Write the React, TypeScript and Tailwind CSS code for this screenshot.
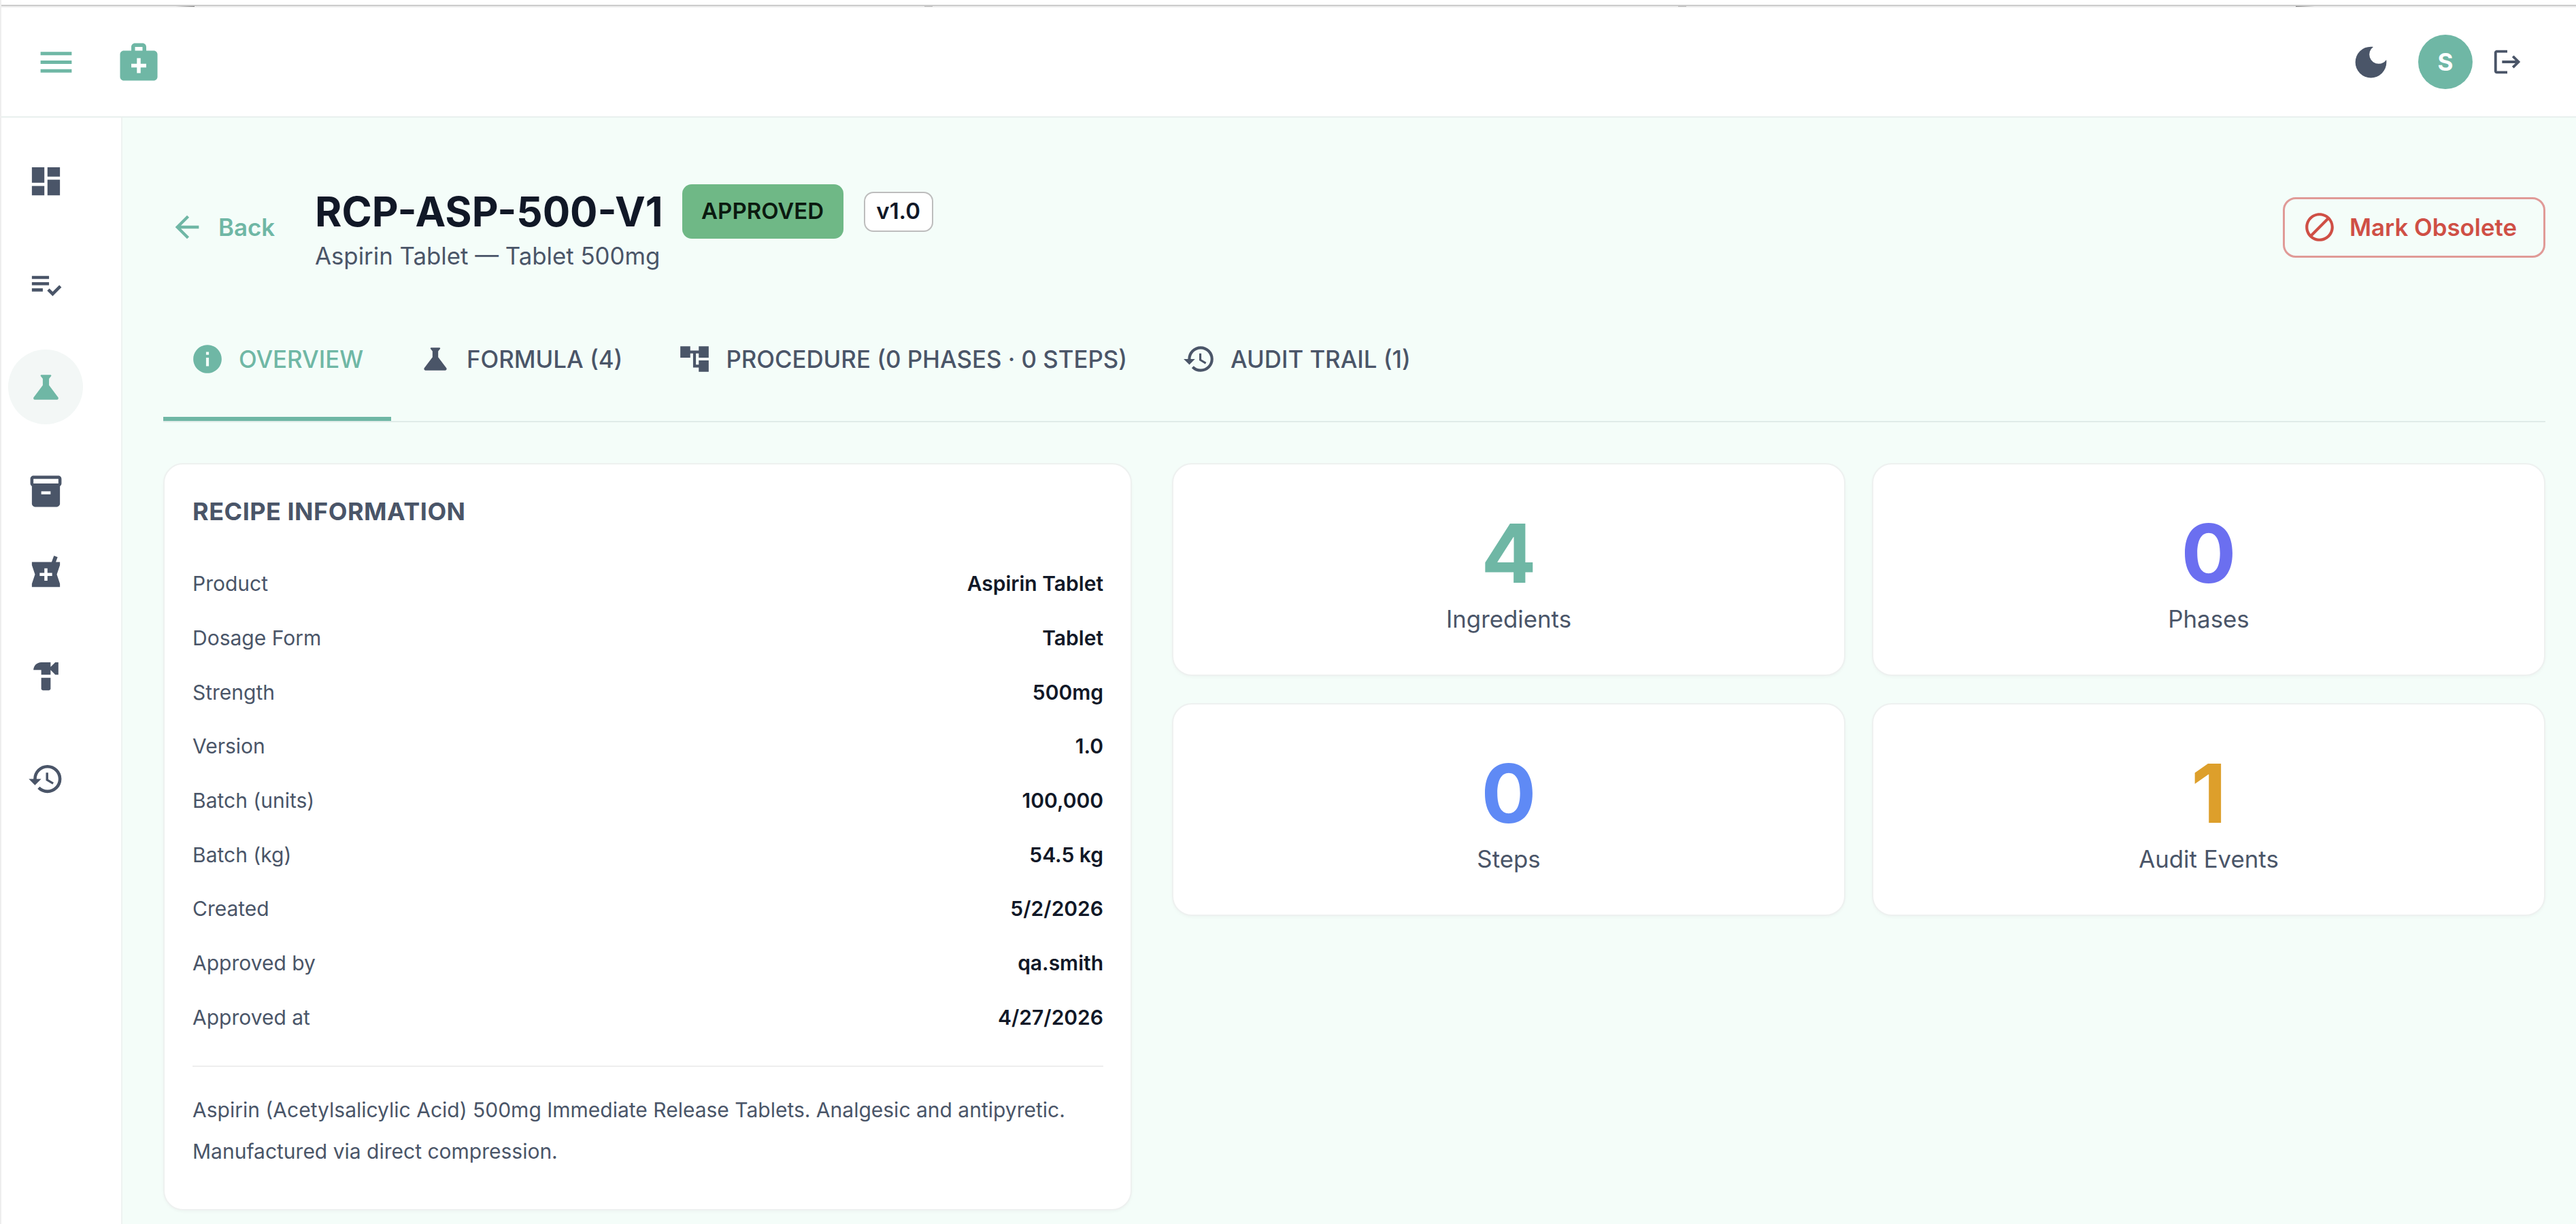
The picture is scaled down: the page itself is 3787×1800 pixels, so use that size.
import type { FC, ReactNode } from "react";
import {
  MdAccountTree,
  MdArrowBack,
  MdBlock,
  MdDarkMode,
  MdDashboard,
  MdHardware,
  MdHistory,
  MdInfo,
  MdInventory2,
  MdLocalPharmacy,
  MdLogout,
  MdMedicalServices,
  MdMenu,
  MdPlaylistAddCheck,
  MdScience,
} from "react-icons/md";

const navItems = [
  { icon: <MdDashboard size={55} />, mt: "mt-[38px]", active: false },
  { icon: <MdPlaylistAddCheck size={55} />, mt: "mt-[43px]", active: false },
  { icon: <MdScience size={55} />, mt: "mt-[40px]", active: true },
  { icon: <MdInventory2 size={55} />, mt: "mt-[43px]", active: false },
  { icon: <MdLocalPharmacy size={55} />, mt: "mt-[10px]", active: false },
  { icon: <MdHardware size={55} />, mt: "mt-[42px]", active: false },
  { icon: <MdHistory size={55} />, mt: "mt-[41px]", active: false },
];

const tabs: { label: string; icon: ReactNode; active?: boolean }[] = [
  { label: "OVERVIEW", icon: <MdInfo size={50} />, active: true },
  { label: "FORMULA (4)", icon: <MdScience size={50} /> },
  { label: "PROCEDURE (0 PHASES · 0 STEPS)", icon: <MdAccountTree size={50} /> },
  { label: "AUDIT TRAIL (1)", icon: <MdHistory size={50} /> },
];

const rows = [
  ["Product", "Aspirin Tablet"],
  ["Dosage Form", "Tablet"],
  ["Strength", "500mg"],
  ["Version", "1.0"],
  ["Batch (units)", "100,000"],
  ["Batch (kg)", "54.5 kg"],
  ["Created", "5/2/2026"],
  ["Approved by", "qa.smith"],
  ["Approved at", "4/27/2026"],
];

const stats = [
  { value: "4", label: "Ingredients", color: "text-[#6fb7a5]" },
  { value: "0", label: "Phases", color: "text-[#6b6ff0]" },
  { value: "0", label: "Steps", color: "text-[#5f8af5]" },
  { value: "1", label: "Audit Events", color: "text-[#dd9f2b]" },
];

const TopBar: FC = () => (
  <header className="flex h-[162px] shrink-0 items-center justify-between border-b-2 border-[#e9f0ee] bg-white pl-[50px] pr-[78px]">
    <div className="flex items-center gap-[58px] text-[#6fb7a5]">
      <MdMenu size={61} />
      <MdMedicalServices size={66} />
    </div>
    <div className="flex items-center text-[#4a5568]">
      <MdDarkMode size={61} />
      <div className="ml-[39px] flex size-[80px] items-center justify-center rounded-full bg-[#6fb7a5] text-[35px] font-bold text-white">
        S
      </div>
      <div className="ml-[28px]">
        <MdLogout size={46} />
      </div>
    </div>
  </header>
);

const Sidebar: FC = () => (
  <nav className="flex w-[178px] shrink-0 flex-col border-r-2 border-[#eef3f1] bg-white pl-[10px]">
    {navItems.map((item, i) => (
      <div
        key={i}
        className={`flex size-[110px] items-center justify-center rounded-full ${item.mt} ${
          item.active ? "bg-[#f3f7f6] text-[#6fb7a5]" : "text-[#4a5568]"
        }`}
      >
        {item.icon}
      </div>
    ))}
  </nav>
);

const RecipeCard: FC = () => (
  <section className="h-[1099px] rounded-[29px] border-2 border-[#eef1f0] bg-white pl-[41px] pr-[40px] pt-[41px] shadow-[0_2px_4px_rgba(0,0,0,0.03)]">
    <h2 className="mb-[39px] text-[36px] leading-[56px] font-bold tracking-[0.5px] text-[#4a5568]">
      RECIPE INFORMATION
    </h2>
    {rows.map(([label, value]) => (
      <div key={label} className="flex h-[79.7px] items-center justify-between text-[30px]">
        <span className="text-[#4a5568]">{label}</span>
        <span className="font-semibold text-[#111827]">{value}</span>
      </div>
    ))}
    <div className="mt-[31px] border-t-2 border-[#eeeeee] pt-[33px] text-[30px] leading-[60.5px] text-[#4a5568]">
      Aspirin (Acetylsalicylic Acid) 500mg Immediate Release Tablets. Analgesic and antipyretic.
      <br />
      Manufactured via direct compression.
    </div>
  </section>
);

export default function App() {
  return (
    <div className="relative flex min-h-screen flex-col overflow-hidden border-l-2 border-[#eeeeee] bg-white font-[Inter,sans-serif]">
      <div className="h-[11px] shrink-0 pt-[7px]">
        <div className="h-[4px] border-t-2 border-[#cccccc] bg-[#eeeeee]" />
      </div>
      <div className="absolute left-[256px] top-[9px] h-[1px] w-[28px] bg-gradient-to-r from-transparent to-[#777777]" />
      <div className="absolute left-[1357px] top-[9px] h-[1px] w-[12px] bg-[#bbbbbb]" />
      <div className="absolute left-[2465px] top-[9px] h-[1px] w-[12px] bg-[#bbbbbb]" />
      <div className="absolute left-[3373px] top-[9px] h-[1px] w-[28px] bg-gradient-to-l from-transparent to-[#777777]" />
      <TopBar />
      <div className="flex min-h-0 flex-1">
        <Sidebar />
        <main className="min-w-0 flex-1 bg-[#f4fdf9] pl-[60px] pr-[45px] pt-[98px]">
          <div className="flex h-[130px] items-center justify-between">
            <div className="flex items-center">
              <div className="mb-[4px] ml-[9px] flex items-center gap-[20px] text-[34.8px] font-semibold text-[#6fb7a5]">
                <MdArrowBack size={52} />
                Back
              </div>
              <div className="ml-[59px]">
                <div className="flex h-[80px] items-center">
                  <h1 className="text-[60px] leading-none font-bold text-[#111827]">RCP-ASP-500-V1</h1>
                  <span className="ml-[28px] flex h-[80px] w-[237px] items-center justify-center rounded-[14px] bg-[#6fb886] text-[33px] font-semibold text-[#0b1a10]">
                    APPROVED
                  </span>
                  <span className="ml-[30px] flex h-[59px] w-[102px] items-center justify-center rounded-[14px] border-2 border-[#bdbdbd] bg-white text-[33px] font-semibold text-[#111827]">
                    v1.0
                  </span>
                </div>
                <p className="text-[34.8px] leading-[50px] text-[#4a5568]">Aspirin Tablet — Tablet 500mg</p>
              </div>
            </div>
            <button className="mb-[4px] flex h-[89px] w-[386px] items-center gap-[19px] rounded-[19px] border-[3px] border-[#e09a97] pl-[26px] text-[34.8px] font-semibold text-[#cf4f45]">
              <MdBlock size={50} />
              Mark Obsolete
            </button>
          </div>

          <div className="mt-[36px] flex h-[184px] border-b-2 border-[#e0ebe8]">
            {tabs.map((tab) => (
              <div
                key={tab.label}
                className={`flex h-[182px] items-center gap-[21px] pl-[40px] pr-[41px] pt-[6px] text-[34.8px] ${
                  tab.active
                    ? "border-b-[6px] border-[#6fb7a5] text-[#6fb7a5]"
                    : "pb-[6px] text-[#4a5568]"
                }`}
              >
                {tab.icon}
                <span className="font-medium">{tab.label}</span>
              </div>
            ))}
          </div>

          <div className="mt-[60px] grid grid-cols-[1424px_1fr] items-start gap-x-[59px]">
            <RecipeCard />
            <div className="grid grid-cols-2 gap-x-[39px] gap-y-[40px]">
              {stats.map((s) => (
                <div
                  key={s.label}
                  className="flex h-[313px] flex-col items-center rounded-[29px] border-2 border-[#eef1f0] bg-white pt-[61px] shadow-[0_2px_4px_rgba(0,0,0,0.03)]"
                >
                  <div className={`text-[120px] leading-[140px] font-bold ${s.color}`}>{s.value}</div>
                  <div className="mt-[4px] text-[34.8px] leading-[44px] text-[#4a5568]">{s.label}</div>
                </div>
              ))}
            </div>
          </div>
        </main>
      </div>
    </div>
  );
}
